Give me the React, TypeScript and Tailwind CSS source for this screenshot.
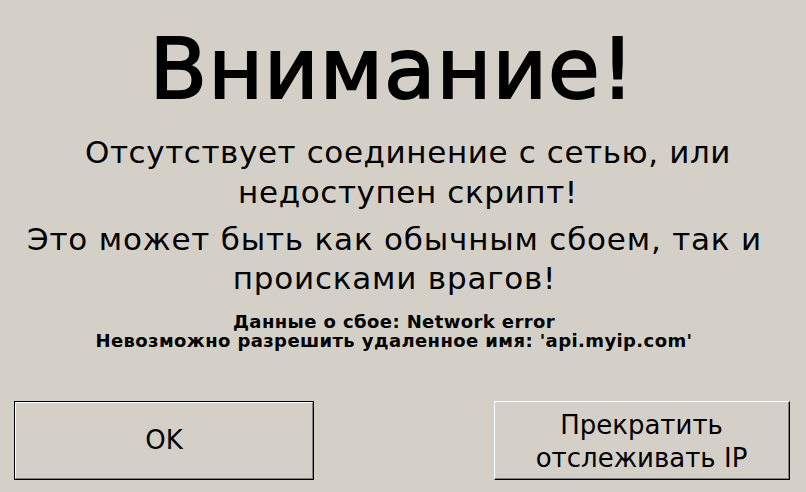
export default function App() {
  return (
    <div className="w-[806px] h-[492px] bg-[#d4d0c8] text-black flex flex-col font-['DejaVu_Sans',Verdana,sans-serif] overflow-hidden">
      {/* Заголовок */}
      <div className="mt-[27px] text-center text-[84px] leading-[84px] tracking-[1px] pr-[21px] whitespace-nowrap [-webkit-text-stroke:2px_black]">
        Внимание!
      </div>
      <div className="mt-[21px] text-center text-[31px] leading-[40px] tracking-[0.6px] pl-[10px] whitespace-nowrap">
        Отсутствует соединение с сетью, или
        <br />
        недоступен скрипт!
      </div>
      <div className="mt-[8px] text-center text-[31px] leading-[39px] tracking-[0.8px] pr-[17px] whitespace-nowrap">
        Это может быть как обычным сбоем, так и
        <br />
        происками врагов!
      </div>
      {/* Подробности ошибки */}
      <div className="mt-[14px] text-center text-[18px] leading-[19px] font-bold tracking-[0.4px] pr-[18px] whitespace-nowrap">
        Данные о сбое: Network error
        <br />
        Невозможно разрешить удаленное имя: 'api.myip.com'
      </div>
      {/* Кнопки */}
      <div className="mt-auto mb-[12px] flex justify-between pl-[14px] pr-[16px]">
        <button className="w-[300px] h-[79px] border border-black bg-[#d4d0c8]">
          <div className="h-full border-t border-l border-white border-r border-b border-r-[#808080] border-b-[#808080] flex items-center justify-center text-[26px] leading-[33px]">
            OK
          </div>
        </button>
        <button className="w-[296px] h-[79px] border-t border-l border-white border-r border-b border-r-black border-b-black bg-[#d4d0c8]">
          <div className="h-full pt-[3px] border-r border-b border-r-[#808080] border-b-[#808080] flex items-center justify-center text-center text-[26px] leading-[33px]">
            Прекратить
            <br />
            отслеживать IP
          </div>
        </button>
      </div>
    </div>
  )
}
